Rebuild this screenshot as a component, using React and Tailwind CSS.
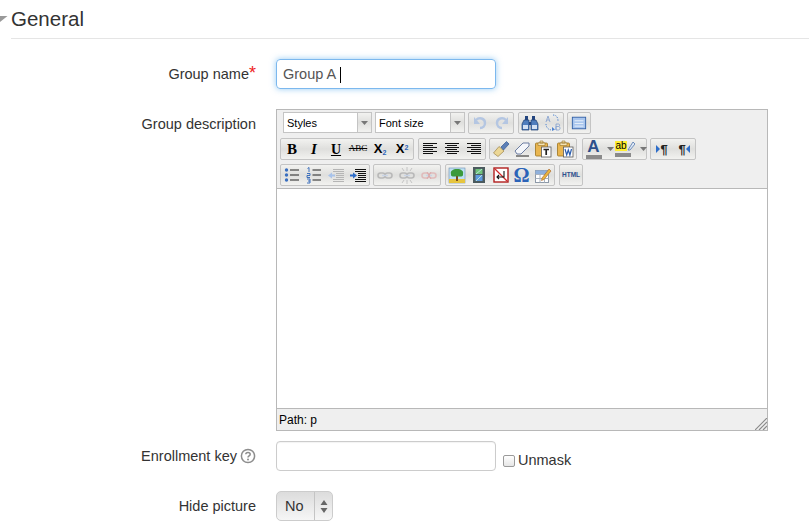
import React from 'react';

const Btn = ({ children, w = 'w-[22px]' }) => (
    <div className={`${w} flex h-full items-center justify-center`}>{children}</div>
);

const Group = ({ children }) => (
    <div className="flex h-[22px] rounded-[2px] border border-[#c4c4c4] bg-gradient-to-b from-[#f2f2f0] via-[#dfdfdd] to-[#f2f2f0]">
        {children}
    </div>
);

const Ico = ({ children, w = 18, h = 18 }) => (
    <svg width={w} height={h} viewBox="0 0 18 18" fill="none">{children}</svg>
);

const Lines = ({ rows, color = '#111' }) => (
    <Ico>
        {rows.map(([x1, x2], i) => (
            <path key={i} d={`M${x1} ${3.5 + i * 2}H${x2}`} stroke={color} />
        ))}
    </Ico>
);

const Arrow = () => (
    <svg width="7" height="4" viewBox="0 0 7 4"><path d="M0 0H7L3.5 4Z" fill="#777" /></svg>
);

const Select = ({ label, w }) => (
    <div className={`${w} flex h-[21px] border border-[#c4c4c4] bg-white`}>
        <div className="flex-1 pl-[3px] text-[11px] leading-[21px] text-black">{label}</div>
        <div className="flex w-[14px] items-center justify-center border-l border-[#c4c4c4] bg-gradient-to-b from-[#f2f2f0] via-[#dfdfdd] to-[#f2f2f0]">
            <Arrow />
        </div>
    </div>
);

const Undo = ({ flip }) => (
    <Ico>
        <g transform={flip ? 'matrix(-1 0 0 1 18 0)' : undefined}>
            <path d="M5 6C8 3 14 4 14 9C14 12 12 14 9 14" stroke="#b4c6e2" strokeWidth="2.4" />
            <path d="M3 3V10H9Z" fill="#b4c6e2" />
        </g>
    </Ico>
);

const Binoculars = () => (
    <Ico>
        <path d="M3 6H8V16H1V10ZM10 6H15L17 10V16H10Z" fill="#4f7dbd" stroke="#1d3c70" strokeWidth=".7" />
        <path d="M4 2H7V6H4ZM11 2H14V6H11ZM8 8H10V11H8Z" fill="#23457f" />
        <path d="M2 11H7V15H2ZM11 11H16V15H11Z" fill="#d3e0f3" />
    </Ico>
);

const Replace = () => (
    <Ico>
        <path d="M3 8L5 2L7 8M4 6H6" stroke="#8aa5d0" strokeWidth=".9" />
        <path d="M10 1C13 1 15 3 15 7M3 10C3 13 5 16 9 16" stroke="#4f83cf" strokeWidth="1" strokeDasharray="1.2 1.2" />
        <path d="M9 13L12 15.5L9 17Z" fill="#4f83cf" />
        <path d="M13 10H15.5C17 10 17 12.5 15.5 12.5H13V16H15.5C17.5 16 17.5 12.5 15.5 12.5M13 10V16" stroke="#8aa5d0" strokeWidth=".9" />
    </Ico>
);

const Fullscreen = () => (
    <Ico w={16} h={16}>
        <rect x="1.5" y="2.5" width="15" height="13" fill="#a9c6ee" stroke="#2f5ea6" />
        <path d="M4 6.5H14M4 9.5H14M4 12.5H14" stroke="#eef4fc" />
    </Ico>
);

const Brush = () => (
    <Ico>
        <path d="M1.5 13L7 6.5L12 11L6 16.5Z" fill="#ecd795" stroke="#9b8347" strokeWidth=".7" />
        <path d="M9 7L14.5 1.5L17 4L11.5 10Z" fill="#5c7fb6" stroke="#345a94" strokeWidth=".7" />
    </Ico>
);

const Eraser = () => (
    <Ico>
        <path d="M2 11L10 3H16V6L8 14H4Z" fill="#f4f6fa" stroke="#5d7199" strokeWidth=".9" />
        <path d="M3 16H16" stroke="#222" />
    </Ico>
);

const Paste = ({ word }) => (
    <Ico>
        <rect x="1.5" y="3" width="12" height="13" rx="1" fill="#e9b650" stroke="#9c7420" strokeWidth=".8" />
        <path d="M4 3H11V5.5H4ZM6 1H9V3H6Z" fill="#f3e4b9" stroke="#9c7420" strokeWidth=".6" />
        <rect x="7.5" y="7" width="9.5" height="10" fill="#fff" stroke="#5a5a5a" strokeWidth=".8" />
        {word ? (
            <path d="M9 9L10.7 15L12.3 10L13.9 15L15.5 9" stroke="#2c5fb0" strokeWidth="1.2" />
        ) : (
            <path d="M9.5 9.5H15M12.2 9.5V15" stroke="#222" strokeWidth="1.7" />
        )}
    </Ico>
);

const Bullets = () => (
    <Ico>
        <path d="M7 4H16M7 9H16M7 14H16" stroke="#222" strokeWidth="1.2" />
        <circle cx="3.5" cy="4" r="1.7" fill="#3a6fc0" />
        <circle cx="3.5" cy="9" r="1.7" fill="#3a6fc0" />
        <circle cx="3.5" cy="14" r="1.7" fill="#3a6fc0" />
    </Ico>
);

const Numbers = () => (
    <Ico>
        <path d="M7.5 4H16M7.5 9H16M7.5 14H16" stroke="#222" strokeWidth="1.2" />
        <path d="M2.5 2.5L4 1.5V6M2 7.5H5V9.5H2V11.5H5M2 13H5V17H2M3 15H5" stroke="#2b63b8" strokeWidth=".9" />
    </Ico>
);

const Indent = ({ out, pale }) => (
    <Ico>
        <path
            d="M6 3.5H17M6 5.5H17M9 7.5H17M9 9.5H17M9 11.5H17M6 13.5H17M6 15.5H17"
            stroke={pale ? '#b5b5b5' : '#111'}
        />
        <path
            d={out ? 'M1 9.5L5 6.5V8.5H8V10.5H5V12.5Z' : 'M8 9.5L4 6.5V8.5H1V10.5H4V12.5Z'}
            fill={pale ? '#a9c3ea' : '#2d6dc9'}
        />
    </Ico>
);

const Link = ({ broken, red }) => (
    <Ico>
        <g stroke={red ? '#e0bcbc' : '#b9b9b9'} strokeWidth="1.6">
            <rect x="2" y="7" width="7" height="5" rx="2.5" />
            <rect x="9" y="7" width="7" height="5" rx="2.5" />
        </g>
        <path d="M6 9.5H12" stroke="#c9d4e6" strokeWidth="1.4" />
        {broken && (
            <path d="M9 1V5M9 14V18M4 2L6 5M14 2L12 5M4 17L6 14M14 17L12 14" stroke="#c4c4c4" />
        )}
        {red && <path d="M7 6L11 13M11 6L7 13" stroke="#dcaaaa" />}
    </Ico>
);

const Picture = () => (
    <Ico>
        <rect x="1" y="2" width="16" height="15" fill="#bfe0f5" stroke="#6f8fb0" strokeWidth=".6" />
        <path d="M1 13H17V17H1Z" fill="#e6c53f" />
        <path d="M8 9H10V15H8Z" fill="#7a4d20" />
        <path d="M9 3C13 3 16 5 15 8C16 11 11 11 9 10C7 11 2 11 3 8C2 5 5 3 9 3Z" fill="#3b9a3b" />
    </Ico>
);

const Film = () => (
    <Ico>
        <rect x="3" y="1" width="12" height="16" fill="#4b5a5e" />
        <path d="M5.5 3H12.5V8H5.5Z" fill="#6fc27a" />
        <path d="M5.5 9H12.5V15H5.5Z" fill="#5f9be0" />
        <path d="M6 8L12 3M6 15L12 9" stroke="#b7e6d8" />
    </Ico>
);

const NoBreak = () => (
    <Ico>
        <rect x="2" y="2" width="14" height="14" fill="#fff" stroke="#b11f1f" strokeWidth="1.4" />
        <path d="M3 3L15 15" stroke="#cf2a2a" strokeWidth="1.2" />
        <path d="M12 5V11H5M7 9L5 11L7 13" stroke="#111" strokeWidth="1.1" />
    </Ico>
);

const TableEdit = () => (
    <Ico>
        <rect x="1.5" y="4.5" width="13" height="12" fill="#fff" stroke="#8d99a8" />
        <path d="M1.5 8.5H14.5M1.5 12.5H14.5M6 4.5V16.5M10.5 4.5V16.5" stroke="#a9b3bf" />
        <path d="M1.5 4.5H14.5V8H1.5Z" fill="#8fb0dc" />
        <path d="M8 12L15 3L17 5L10 13.5L7.5 14.5Z" fill="#e9b53f" stroke="#a8612a" strokeWidth=".6" />
    </Ico>
);

const Row = ({ label, children, extra }) => (
    <div className="flex">
        <div className="w-[256px] text-right text-[14.5px] leading-[30px] text-[#333]">
            {label}
            {extra}
        </div>
        <div className="ml-[20px] flex">{children}</div>
    </div>
);

export default function App() {
    return (
        <div className="h-[530px] w-[809px] overflow-hidden bg-white font-['Liberation_Sans',Arial,sans-serif]">
            {/* Section heading */}
            <div className="flex pt-[7px]">
                <svg className="mt-[9px] shrink-0" width="11" height="7" viewBox="0 0 11 7">
                    <path d="M0 0H7.5L0 6Z" fill="#999" />
                </svg>
                <div className="h-[32px] flex-1 border-b border-[#e5e5e5] text-[20.5px] leading-[24px] text-[#333]">
                    General
                </div>
            </div>

            <div className="mt-[20px] flex flex-col">
                <Row label="Group name" extra={<span className="text-[18px] leading-none text-[#ee2222]">*</span>}>
                    <div className="flex h-[30px] w-[220px] items-center rounded-[4px] border border-[#7cb8ee] pl-[6px] pt-[1px] text-[14.5px] text-[#555] shadow-[0_0_6px_rgba(82,168,236,0.6)]">
                        Group A
                        <span className="ml-[4px] h-[16px] w-px bg-black" />
                    </div>
                </Row>

                {/* Editor */}
                <div className="mt-[20px] flex">
                    <div className="w-[256px] text-right text-[14.5px] leading-[30px] text-[#333]">Group description</div>
                    <div className="ml-[20px] flex h-[322px] w-[492px] flex-col border border-[#b8b8b8] bg-[#efefef]">
                        <div className="flex h-[78px] flex-col gap-[4px] pl-[3px] pt-[2px]">
                            <div className="flex h-[22px] gap-[3px] pl-[3px]">
                                <Select label="Styles" w="w-[89px]" />
                                <Select label="Font size" w="w-[90px]" />
                                <Group>
                                    <Btn><Undo /></Btn>
                                    <Btn><Undo flip /></Btn>
                                </Group>
                                <div className="ml-[1px]">
                                    <Group>
                                        <Btn><Binoculars /></Btn>
                                        <Btn><Replace /></Btn>
                                    </Group>
                                </div>
                                <Group>
                                    <Btn><Fullscreen /></Btn>
                                </Group>
                            </div>
                            <div className="flex gap-[3px]">
                                <Group>
                                    <Btn><span className="font-['Liberation_Serif',serif] text-[15px] font-bold text-black">B</span></Btn>
                                    <Btn><span className="font-['Liberation_Serif',serif] text-[15px] font-bold italic text-black">I</span></Btn>
                                    <Btn><span className="font-['Liberation_Serif',serif] text-[14px] font-bold text-black underline">U</span></Btn>
                                    <Btn><span className="font-['Liberation_Serif',serif] text-[9px] text-black line-through">ABC</span></Btn>
                                    <Btn><span className="text-[13px] font-bold text-black">X<sub className="text-[7px] text-[#2b63b8]">2</sub></span></Btn>
                                    <Btn><span className="text-[13px] font-bold text-black">X<sup className="text-[7px] text-[#2b63b8]">2</sup></span></Btn>
                                </Group>
                                <div className="ml-[1px]">
                                    <Group>
                                        <Btn><Lines rows={[[2, 16], [2, 12], [2, 16], [2, 12], [2, 16], [2, 12]]} /></Btn>
                                        <Btn><Lines rows={[[2, 16], [4, 14], [2, 16], [4, 14], [2, 16], [4, 14]]} /></Btn>
                                        <Btn><Lines rows={[[2, 16], [6, 16], [2, 16], [6, 16], [2, 16], [6, 16]]} /></Btn>
                                    </Group>
                                </div>
                                <Group>
                                    <Btn w="w-[21px]"><Brush /></Btn>
                                    <Btn w="w-[21px]"><Eraser /></Btn>
                                    <Btn><Paste /></Btn>
                                    <Btn><Paste word /></Btn>
                                </Group>
                                <div className="ml-[2px]">
                                    <Group>
                                        <Btn w="w-[33px]">
                                            <div className="flex flex-col items-center">
                                                <span className="text-[17px] font-bold leading-[14px] text-[#2c4f8c]">A</span>
                                                <span className="mt-[1px] h-[4px] w-[16px] bg-[#8a8a8a]" />
                                            </div>
                                            <span className="ml-[5px] flex"><Arrow /></span>
                                        </Btn>
                                        <Btn w="w-[30px]">
                                            <div className="flex flex-col items-start">
                                                <div className="flex items-center">
                                                    <span className="bg-[#ffee33] text-[10px] leading-[10px] text-black">ab</span>
                                                    <svg width="8" height="10" viewBox="0 0 8 10"><path d="M1 9L6 1L8 3L3 9Z" fill="#dfe8f5" stroke="#5176ad" strokeWidth=".8" /></svg>
                                                </div>
                                                <span className="mt-[2px] h-[4px] w-[16px] bg-[#8a8a8a]" />
                                            </div>
                                            <span className="ml-[5px] flex"><Arrow /></span>
                                        </Btn>
                                    </Group>
                                </div>
                                <Group>
                                    <Btn>
                                        <svg width="4" height="8" viewBox="0 0 4 8"><path d="M0 0L4 4L0 8Z" fill="#2d6dc9" /></svg>
                                        <span className="text-[13px] font-bold leading-none text-[#222]">¶</span>
                                    </Btn>
                                    <Btn>
                                        <span className="text-[13px] font-bold leading-none text-[#222]">¶</span>
                                        <svg width="4" height="8" viewBox="0 0 4 8"><path d="M4 0L0 4L4 8Z" fill="#2d6dc9" /></svg>
                                    </Btn>
                                </Group>
                            </div>
                            <div className="flex gap-[3px]">
                                <Group>
                                    <Btn><Bullets /></Btn>
                                    <Btn><Numbers /></Btn>
                                    <Btn><Indent out pale /></Btn>
                                    <Btn><Indent /></Btn>
                                </Group>
                                <Group>
                                    <Btn><Link /></Btn>
                                    <Btn><Link broken /></Btn>
                                    <Btn><Link red /></Btn>
                                </Group>
                                <div className="ml-[1px]">
                                    <Group>
                                        <Btn><Picture /></Btn>
                                        <Btn><Film /></Btn>
                                        <Btn w="w-[21px]"><NoBreak /></Btn>
                                        <Btn w="w-[21px]"><span className="font-['Liberation_Serif',serif] text-[20px] font-bold leading-none text-[#2b63b8]">Ω</span></Btn>
                                        <Btn><TableEdit /></Btn>
                                    </Group>
                                </div>
                                <div className="ml-[1px]">
                                    <Group>
                                        <Btn><span className="text-[6.5px] font-bold text-[#2c4f8c]">HTML</span></Btn>
                                    </Group>
                                </div>
                            </div>
                        </div>
                        <div className="h-[221px] border-y border-[#b8b8b8] bg-white" />
                        <div className="flex flex-1 items-center justify-between pl-[2px] text-[12px] text-black">
                            <span>Path: p</span>
                            <svg className="mt-[8px]" width="12" height="12" viewBox="0 0 12 12">
                                <path d="M0 12L12 0M4 12L12 4M8 12L12 8" stroke="#8a8a8a" strokeWidth="1.2" />
                            </svg>
                        </div>
                    </div>
                </div>

                <div className="mt-[10px]">
                    <Row
                        label="Enrollment key"
                        extra={
                            <svg className="ml-[3px] inline-block align-[-3px]" width="16" height="16" viewBox="0 0 16 16">
                                <circle cx="8" cy="8" r="6.6" fill="none" stroke="#8d8d8d" strokeWidth="1.5" />
                                <path d="M5.8 6.3C5.8 3.8 10.2 3.8 10.2 6.3C10.2 7.9 8 7.9 8 9.6" fill="none" stroke="#8d8d8d" strokeWidth="1.5" />
                                <circle cx="8" cy="11.6" r="1" fill="#8d8d8d" />
                            </svg>
                        }
                    >
                        <div className="h-[30px] w-[220px] rounded-[4px] border border-[#cccccc] shadow-[inset_0_1px_1px_rgba(0,0,0,0.05)]" />
                        <div className="ml-[7px] mt-[13px] flex h-[14px] items-center gap-[3px] text-[14.5px] text-[#333]">
                            <span className="h-[12px] w-[12px] rounded-[2px] border border-[#9a9a9a] bg-gradient-to-b from-white to-[#e6e6e6]" />
                            Unmask
                        </div>
                    </Row>
                </div>

                <div className="mt-[20px]">
                    <Row label="Hide picture">
                        <div className="flex h-[30px] w-[57px] rounded-[5px] border border-[#cccccc] bg-gradient-to-b from-[#dcdcdc] to-[#f6f6f6] text-[14.5px] text-[#333]">
                            <div className="w-[37px] pl-[8px] leading-[28px]">No</div>
                            <div className="flex flex-1 items-center justify-center border-l border-[#c4c4c4]">
                                <svg width="8" height="13" viewBox="0 0 8 13">
                                    <path d="M4 0L7.5 5H0.5ZM4 13L0.5 8H7.5Z" fill="#666" />
                                </svg>
                            </div>
                        </div>
                    </Row>
                </div>
            </div>
        </div>
    );
}
